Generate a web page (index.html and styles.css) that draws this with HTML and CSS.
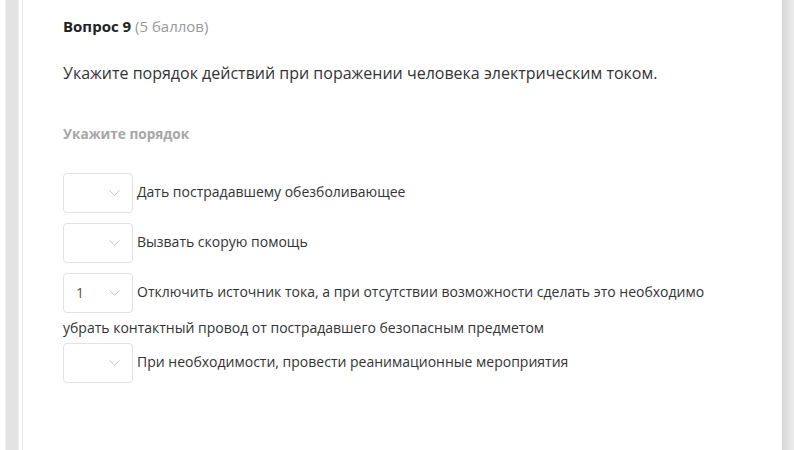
FILE: index.html
```html
<!DOCTYPE html>
<html lang="ru">
<head>
  <meta charset="UTF-8">
  <title>Вопрос 9</title>
  <link rel="stylesheet" href="styles.css">
</head>
<body>
  <div class="side-left"></div>

  <main class="card">
    <h3 class="q-title">Вопрос 9 <span class="q-points">(5 баллов)</span></h3>
    <p class="q-text">Укажите порядок действий при поражении человека электрическим током.</p>
    <h4 class="q-hint">Укажите порядок</h4>

    <div class="order-list">
      <div class="order-row"><div class="order-select"><svg class="chevron" width="11" height="6" viewBox="0 0 11 6"><path d="M0.5 0.5 L5.5 5.2 L10.5 0.5" fill="none" stroke="#c4c4c4" stroke-width="1"/></svg></div>Дать пострадавшему обезболивающее</div>

      <div class="order-row"><div class="order-select"><svg class="chevron" width="11" height="6" viewBox="0 0 11 6"><path d="M0.5 0.5 L5.5 5.2 L10.5 0.5" fill="none" stroke="#c4c4c4" stroke-width="1"/></svg></div>Вызвать скорую помощь</div>

      <div class="order-row"><div class="order-select"><span class="order-value">1</span><svg class="chevron" width="11" height="6" viewBox="0 0 11 6"><path d="M0.5 0.5 L5.5 5.2 L10.5 0.5" fill="none" stroke="#c4c4c4" stroke-width="1"/></svg></div>Отключить источник тока, а при отсутствии возможности сделать это необходимо убрать контактный провод от пострадавшего безопасным предметом</div>

      <div class="order-row"><div class="order-select"><svg class="chevron" width="11" height="6" viewBox="0 0 11 6"><path d="M0.5 0.5 L5.5 5.2 L10.5 0.5" fill="none" stroke="#c4c4c4" stroke-width="1"/></svg></div>При необходимости, провести реанимационные мероприятия</div>
    </div>
  </main>

  <div class="side-right"></div>
</body>
</html>
```

FILE: styles.css
```css
html, body {
  height: 100%;
}

body {
  margin: 0;
  display: flex;
  background-color: #fff;
  font-family: "Open Sans", "Liberation Sans", sans-serif;
  color: #333;
  overflow: hidden;
}

.side-left {
  width: 12px;
  margin-left: 5px;
  margin-right: 3px;
  background-color: #e3e3e3;
  border-left: 1px solid #eee;
  border-right: 1px solid #eee;
}

.card {
  flex: 1;
  border-left: 1px solid #e6e6e6;
  padding: 16px 40px 0 40px;
}

.side-right {
  width: 12px;
  background: linear-gradient(to right, #d6d6d6, #ececec);
}

.q-title {
  margin: 0;
  font-size: 15px;
  line-height: 20px;
  font-weight: bold;
  color: #222;
}

.q-points {
  font-weight: normal;
  color: #999;
}

.q-text {
  margin: 25px 0 0 0;
  font-size: 16px;
  line-height: 24px;
  color: #333;
}

.q-hint {
  margin: 39px 0 0 0;
  font-size: 13.6px;
  line-height: 20px;
  font-weight: bold;
  color: #a6a6a6;
}

.order-list {
  margin-top: 24px;
}

.order-row {
  font-size: 14px;
  line-height: 20px;
  color: #333;
}

.order-select {
  display: inline-flex;
  align-items: center;
  justify-content: flex-end;
  box-sizing: border-box;
  width: 70px;
  height: 40px;
  margin: 5px 4px 5px 0;
  padding: 0 12px;
  border: 1px solid #e2e2e2;
  border-radius: 4px;
  vertical-align: middle;
  color: #555;
}

.order-value {
  margin-right: auto;
}

.chevron {
  display: block;
}
```
